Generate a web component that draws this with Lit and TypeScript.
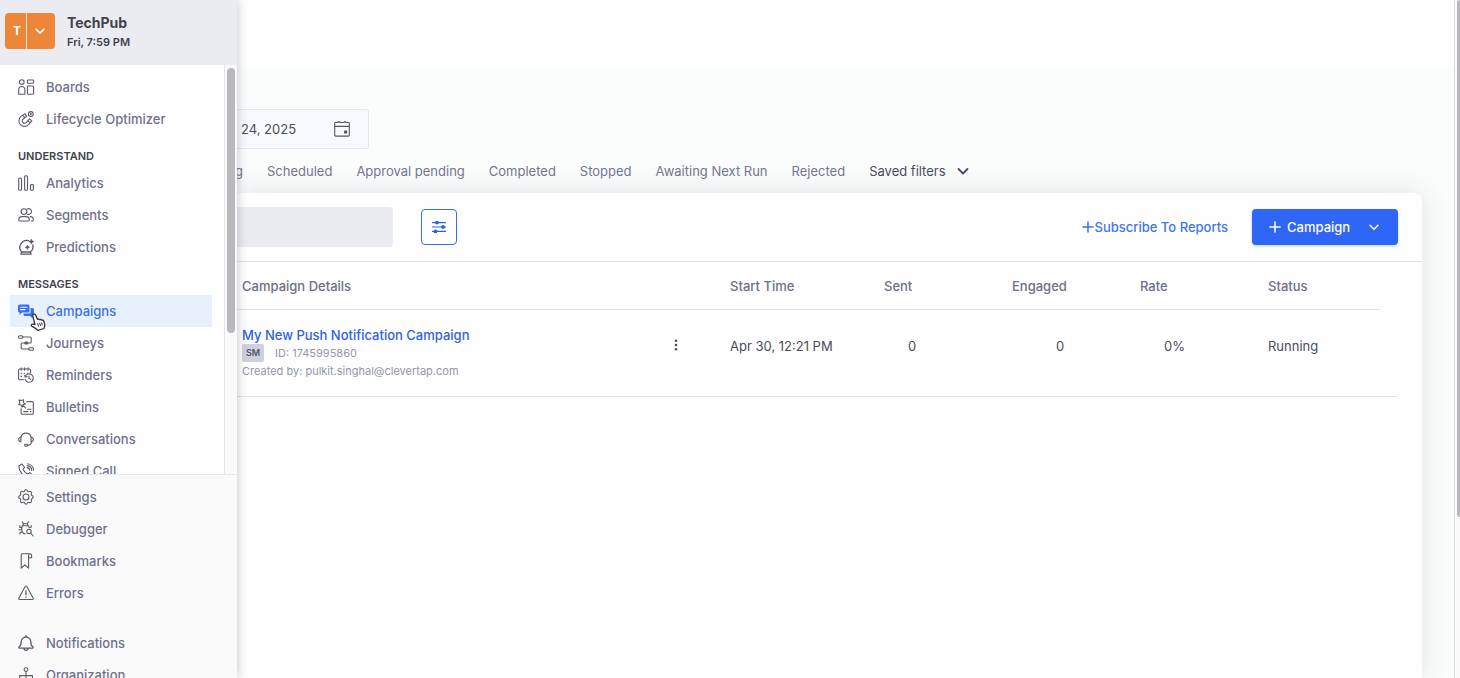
import { LitElement, html, css, svg } from "lit";
import { customElement, property } from "lit/decorators.js";

const icons: Record<string, unknown> = {
  boards: svg`<circle cx="3.800" cy="3" r="2.300"/><rect x="9.400" y="1" width="6.200" height="3.200" rx=".8"/><path d="M.7 15.200V10.600a3.100 3.100 0 0 1 6.200 0v4.600z"/><rect x="9.400" y="7" width="6.200" height="8.200" rx=".6"/>`,
  lifecycle: svg`<circle cx="12.800" cy="3" r="2.400"/><circle cx="12.800" cy="3" r=".5"/><path d="M7 2.600 3 5.400a5.600 5.600 0 1 0 7.600 8.200l3.200-3.800-2.300-2-3.200 3.600a2.300 2.300 0 0 1-3.400-3.200l3.700-3zM4.800 4.200l1.900 2.600M9.800 9.600l2.300 2.200"/>`,
  analytics: svg`<rect x=".7" y="3" width="2.800" height="12.200" rx="1"/><rect x="6.600" y=".8" width="2.900" height="14.400" rx="1"/><rect x="12.500" y="9.600" width="2.900" height="5.600" rx="1"/>`,
  segments: svg`<circle cx="6" cy="4.600" r="2.900"/><path d="M.8 13v-.4c0-1.800 1.300-3 3-3h4.500c1.700 0 3 1.200 3 3v.4c0 .6-.4 1-1 1H1.800c-.6 0-1-.4-1-1z"/><path d="M9.300 1.900a2.900 2.900 0 1 1 .2 5.300M12.200 9.600c1.800 0 3.100 1.200 3.100 3v.4c0 .6-.4 1-1 1h-.8"/>`,
  predictions: svg`<path stroke-width="1.300" d="M10.600 1.600A7 7 0 0 0 3.600 13h8.800A7 7 0 0 0 14.800 6M3.600 13l-.7 2.200h10.200l-.7-2.200"/><path d="m13.400.6.6 1.400 1.400.6-1.400.6-.6 1.400-.6-1.400-1.400-.6 1.400-.6zM9.400 6.600l.5 1.200 1.200.5-1.200.5-.5 1.200-.5-1.200-1.200-.5 1.200-.5z" fill="currentColor"/>`,
  campaigns: svg`<path fill="currentColor" stroke="none" d="M1.500 1.500h8.500a1.500 1.500 0 0 1 1.500 1.500v5a1.500 1.500 0 0 1-1.500 1.500H4L1.500 12V9.400A1.500 1.500 0 0 1 0 8V3a1.500 1.500 0 0 1 1.500-1.500zM12.500 5h2A1.500 1.500 0 0 1 16 6.500v5a1.500 1.500 0 0 1-1.500 1.500v2.400L12 13H7a1.500 1.500 0 0 1-1.500-1.500v-1H11a1.500 1.500 0 0 0 1.500-1.500z"/><path stroke="#e8f1fd" d="M2.500 4.200h6.400M2.500 6.600H7"/>`,
  journeys: svg`<rect x=".6" y=".8" width="4.200" height="2.400" rx="1"/><rect x="10.800" y="12.800" width="4.600" height="2.400" rx="1"/><path d="M4.800 2h7.400c.6 0 1 .4 1 1v4c0 .6-.4 1-1 1H4.200c-.6 0-1 .4-1 1v4c0 .6.4 1 1 1h6.600"/><rect x="6.800" y="7" width="3.200" height="2" rx="1" fill="currentColor"/>`,
  reminders: svg`<path d="M5.400 12.800H1.600a1 1 0 0 1-1-1V3a1 1 0 0 1 1-1h10a1 1 0 0 1 1 1v2.600M3.200.8v2.400M6.600.8v2.400M10 .8v2.400M3 6.200h.6M6.200 6.200h.6M9.400 6.200h.6M3 9.400h.6"/><path d="M7.200 9.400a4.200 4.200 0 1 1-.2 2.800M6.600 8.200l.6 1.800 1.900-.4M11 9v2.400l1.800.8"/>`,
  bulletins: svg`<path d="m1 1 2.200.6 2.400-.8-.2 2.800 2 1.400-2.600.8-.6 2.400-1.400-2.400L.8 5.600 1.800 4zM5 6.400l2.600 2.400M9 2.600h5a1.300 1.300 0 0 1 1.300 1.300v10a1.300 1.300 0 0 1-1.300 1.300H4.400a1.300 1.300 0 0 1-1.300-1.300V9.600M5.800 12.600h4.200M12.400 12.600h.6M9.600 10.200h3.400"/>`,
  conversations: svg`<path d="M2.800 6.400a5.300 5.300 0 0 1 10.400 0M13.400 10.800c0 2-1.400 3.400-3.600 3.400"/><path d="M2.900 6.200C1.400 6.200.7 7.200.7 8.400s.7 2.200 2.200 2.200zM13.100 6.200c1.500 0 2.200 1 2.200 2.200s-.7 2.200-2.200 2.200z"/><rect x="6.600" y="13.200" width="3.200" height="1.900" rx=".9"/>`,
  call: svg`<path d="M3.800 1 .9 3C.6 9 6.600 15.400 13 15.200l2.200-2.700-3.500-2.900-2 1.400C7.400 10 6 8.300 5 6.300l1.500-1.900zM9.200 4.600a2.800 2.800 0 0 1 2.400 2.700M9.300 2.600a5 5 0 0 1 4.400 4.900M9.400.700a7 7 0 0 1 6.200 6.600"/>`,
  settings: svg`<circle cx="8" cy="8" r="3"/><path d="M6.600 1.800C7 .4 9 .4 9.400 1.800c.3.900 1.200 1.200 2 .8 1.300-.7 2.700.7 2 2-.4.800-.1 1.700.8 2 1.400.4 1.400 2.400 0 2.800-.9.300-1.200 1.200-.8 2 .7 1.300-.7 2.700-2 2-.8-.4-1.700-.1-2 .8-.4 1.400-2.400 1.400-2.800 0-.3-.9-1.200-1.200-2-.8-1.300.7-2.700-.7-2-2 .4-.8.100-1.700-.8-2-1.400-.4-1.400-2.400 0-2.800.9-.3 1.200-1.200.8-2-.7-1.300.7-2.700 2-2 .8.400 1.700.1 2-.8z"/>`,
  debugger: svg`<path d="M4.400 4.800h6M4.200 5c-.5 1.600-.6 3.600-.1 5.200.5 1.400 1.600 2.500 3.100 2.700M10.600 5c.3.600.4 1 .4 1.600M4.600 4.600a2.900 2.900 0 0 1 5.600 0M5.400 2.600 4.200.8M9.400 2.600 10.600.8M4 6.400H1.800V4.600M3.600 8.800H.8M4.200 11.200H2v1.800M11 6.200h2.200V4.600"/><circle cx="11" cy="10.400" r="2.200"/><path d="m12.600 12.200 2.600 2.800"/>`,
  bookmarks: svg`<path d="M4.200.8h7.700a1.700 1.700 0 0 1 1.700 1.700v2.300h-3M12 .8a1.500 1.500 0 0 0-1.400 1.500v12.900l-3.700-3.200-3.700 3.200V1.800a1 1 0 0 1 1-1"/>`,
  errors: svg`<path d="M7.200 1.600a.9.900 0 0 1 1.600 0l6.400 11.600c.3.600 0 1.300-.8 1.300H1.600c-.8 0-1.100-.7-.8-1.300z"/><path stroke-width="1.300" d="M8 5.800v4M8 12v.2"/>`,
  notifications: svg`<path stroke-width="1.300" d="M8 .5v1.200M3.200 6.800a4.800 4.800 0 0 1 9.600 0c0 3.400.7 4.200 2 5 .7.500.4 1.300-.4 1.300H1.600c-.8 0-1.100-.8-.4-1.300 1.300-.8 2-1.600 2-5zM6 13.300a2 2 0 0 0 4 0"/>`,
  organization: svg`<circle cx="8" cy="2.600" r="1.900"/><path d="M8 4.600v8M1.600 12.400V8.600h12.800v3.800"/><circle cx="1.800" cy="13.600" r="1.300"/><circle cx="8" cy="13.600" r="1.300"/><circle cx="14.200" cy="13.600" r="1.300"/>`,
  calendar: svg`<path d="M.7 2.400c0-.5.400-.9.900-.9h2.200l1.200-1 1.200 1h3.600l1.200-1 1.200 1h2.200c.5 0 .9.400.9.900v11.700a1 1 0 0 1-1 1H1.700a1 1 0 0 1-1-1zM.7 5.400h14.600"/><rect x="10.600" y="10" width="2" height="2" fill="currentColor"/>`,
  sliders: svg`<path d="M1.500 3.600h13M1.500 8h13M1.500 12.400h13"/><g fill="currentColor" stroke="none"><circle cx="6" cy="3.600" r="1.900"/><circle cx="12" cy="8" r="1.900"/><circle cx="4.500" cy="12.400" r="1.900"/></g>`,
  chevron: svg`<path d="m3.500 6 4.500 4.500L12.500 6"/>`,
  plus: svg`<path d="M8 2.200v11.600M2.200 8h11.600"/>`,
  kebab: svg`<g fill="currentColor" stroke="none"><circle cx="8" cy="3.200" r="1.500"/><circle cx="8" cy="8" r="1.500"/><circle cx="8" cy="12.800" r="1.500"/></g>`,
};

@customElement("ui-icon")
export class UiIcon extends LitElement {
  @property() name = "";
  static styles = css`
    :host { display: inline-flex; width: 16px; height: 16px; flex: none; }
    .glyph {
      width: 100%; height: 100%; overflow: visible; fill: none; stroke: currentColor;
      stroke-width: var(--icon-stroke, 1.1); stroke-linecap: round; stroke-linejoin: round;
    }
  `;
  render() {
    return html`<svg class="glyph" viewBox="0 0 16 16" aria-hidden="true">${icons[this.name]}</svg>`;
  }
}

interface NavItem { icon: string; label: string; active?: boolean; }

const groups: { title?: string; items: NavItem[] }[] = [
  { items: [{ icon: "boards", label: "Boards" }, { icon: "lifecycle", label: "Lifecycle Optimizer" }] },
  {
    title: "UNDERSTAND",
    items: [
      { icon: "analytics", label: "Analytics" },
      { icon: "segments", label: "Segments" },
      { icon: "predictions", label: "Predictions" },
    ],
  },
  {
    title: "MESSAGES",
    items: [
      { icon: "campaigns", label: "Campaigns", active: true },
      { icon: "journeys", label: "Journeys" },
      { icon: "reminders", label: "Reminders" },
      { icon: "bulletins", label: "Bulletins" },
      { icon: "conversations", label: "Conversations" },
      { icon: "call", label: "Signed Call" },
    ],
  },
];

const tools: NavItem[] = [
  { icon: "settings", label: "Settings" },
  { icon: "debugger", label: "Debugger" },
  { icon: "bookmarks", label: "Bookmarks" },
  { icon: "errors", label: "Errors" },
];

const account: NavItem[] = [
  { icon: "notifications", label: "Notifications" },
  { icon: "organization", label: "Organization" },
];

@customElement("side-nav")
export class SideNav extends LitElement {
  static styles = css`
    :host {
      display: flex; flex-direction: column; position: relative; z-index: 1; min-height: 0;
      background: #fefefe; box-shadow: 0 0 10px rgba(40, 44, 70, 0.28);
    }
    .org { display: flex; align-items: flex-start; gap: 12px; height: 65px; padding: 13px 5px 0; box-sizing: border-box; background: #ebecf1; flex: none; }
    .switch {
      display: grid; grid-template-columns: 22px 1fr; width: 50px; height: 36px; padding: 0; border: 0;
      border-radius: 4px; overflow: hidden; background: #ee8639; color: #fff; font: 700 12px/36px Inter, sans-serif;
    }
    .initial { border-right: 1px solid #fbe3d0; padding-left: 3px; }
    .caret { display: grid; place-items: center; padding-right: 3px; --icon-stroke: 2; }
    .caret ui-icon { width: 14px; height: 14px; }
    .name { margin: 0; font-size: 14px; line-height: 20px; font-weight: 700; color: #42434d; }
    .time { margin: 0; font-size: 11px; line-height: 19px; font-weight: 600; color: #42434d; }
    .scroller { display: grid; grid-template-columns: 1fr 13px; flex: 0 0 409px; overflow: hidden; }
    .list { padding: 6px 12px 0 10px; overflow: hidden; }
    .track { border-left: 1px solid #e4e4ea; padding: 3px 2px; background: #fbfbfb; }
    .thumb { height: 265px; width: 8px; border-radius: 4px; background: #b9b9bb; }
    .title { margin: 0; height: 32px; padding: 11px 8px 0; box-sizing: border-box; font-size: 11px; line-height: 20px; font-weight: 600; color: #42434d; }
    .item {
      display: flex; align-items: center; gap: 12px; height: 32px; padding: 0 8px;
      color: #70708c; font-size: 13px; font-weight: 500; text-decoration: none;
    }
    .item ui-icon { color: #5c5d64; }
    .item.active, .item.active ui-icon { color: #3a71ee; }
    .item.active { background: #e8f1fb; }
    .lower { flex: 1; min-height: 0; overflow: hidden; padding: 6px 12px 0 10px; border-top: 1px solid #e8e8ee; background: #fafafb; }
    .account { margin-top: 18px; }
    .pointer { position: absolute; left: 29px; top: 313px; width: 17px; height: 18px; }
  `;
  private item(i: NavItem) {
    return html`<a class="item ${i.active ? "active" : ""}" href="#"><ui-icon name=${i.icon}></ui-icon>${i.label}</a>`;
  }
  render() {
    return html`
      <div class="org">
        <button class="switch" aria-label="Switch project">
          <span class="initial">T</span><span class="caret"><ui-icon name="chevron"></ui-icon></span>
        </button>
        <div><p class="name">TechPub</p><p class="time">Fri, 7:59 PM</p></div>
      </div>
      <div class="scroller">
        <nav class="list">
          ${groups.map((g) => html`${g.title ? html`<h2 class="title">${g.title}</h2>` : ""}${g.items.map((i) => this.item(i))}`)}
        </nav>
        <div class="track"><div class="thumb"></div></div>
      </div>
      <nav class="lower">
        ${tools.map((i) => this.item(i))}
        <div class="account">${account.map((i) => this.item(i))}</div>
      </nav>
      <svg class="pointer" viewBox="0 0 17 18" aria-hidden="true">
        <path fill="#fff" stroke="#333" stroke-width="1.300" stroke-linejoin="round" d="M4.400 1.400c.9-.6 1.900-.2 2.300.7l1.700 4.200c.8-.5 1.700-.3 2.100.4.800-.5 1.700-.2 2.100.5 1-.4 1.900 0 2.200 1l.8 2.600c.4 1.700-.2 3-.5 4.700L8.800 17.400c-1.400-1.900-3.500-2.900-5.900-4.200-1.100-.8-.3-2.200.9-2.100l2.200.4L3.800 3.200c-.3-.8-.1-1.400.6-1.800z"/>
        <path fill="none" stroke="#333" d="m8.600 10.400 1 3.200M10.600 9.900l1 3.200M12.500 9.400l.8 3"/>
      </svg>
    `;
  }
}

@customElement("campaign-table")
export class CampaignTable extends LitElement {
  static styles = css`
    :host { display: block; padding-right: 25px; }
    .table { width: 100%; border-collapse: collapse; table-layout: fixed; font-size: 13px; color: #4c4d5a; }
    .menu-col { width: 80px; }
    .start-col { width: 154px; }
    .num-col { width: 128px; }
    .status-col { width: 112px; }
    .gutter-col { width: 17px; }
    .head { height: 47px; padding: 0; text-align: left; font-weight: 500; color: #6f6f86; border-bottom: 1px solid #e2e3ea; }
    .cell { height: 71px; padding: 0 0 15px; border-bottom: 1px solid #e2e3ea; }
    .head.details { padding-left: 5px; }
    .cell.details { padding: 0 0 0 5px; }
    .cell.short { padding-left: 24px; }
    .cell.wide { padding-left: 44px; }
    .link { display: block; font-size: 13px; line-height: 18px; font-weight: 500; color: #2f62e4; text-decoration: none; }
    .meta { display: flex; align-items: center; gap: 11px; font-size: 11px; line-height: 18px; color: #9596aa; }
    .tag { width: 22px; text-align: center; border-radius: 2px; background: #cfd0de; color: #55566a; font-size: 9px; font-weight: 600; }
    .more { display: block; width: 24px; height: 24px; padding: 4px; border: 0; background: none; color: #4c4d5a; margin-left: 14px; }
    .more ui-icon { width: 16px; height: 14px; }
  `;
  render() {
    return html`
      <table class="table">
        <colgroup>
          <col /><col class="menu-col" /><col class="start-col" /><col class="num-col" /><col class="num-col" />
          <col class="num-col" /><col class="status-col" /><col class="gutter-col" />
        </colgroup>
        <thead>
          <tr>
            <th class="head details" colspan="2">Campaign Details</th>
            <th class="head">Start Time</th><th class="head">Sent</th><th class="head">Engaged</th>
            <th class="head">Rate</th><th class="head">Status</th><td></td>
          </tr>
        </thead>
        <tbody>
          <tr>
            <td class="cell details">
              <a class="link" href="#">My New Push Notification Campaign</a>
              <div class="meta"><span class="tag">SM</span><span>ID: 1745995860</span></div>
              <div class="meta">Created by: pulkit.singhal@clevertap.com</div>
            </td>
            <td class="cell"><button class="more" aria-label="More actions"><ui-icon name="kebab"></ui-icon></button></td>
            <td class="cell">Apr 30, 12:21 PM</td>
            <td class="cell short">0</td><td class="cell wide">0</td><td class="cell short">0%</td>
            <td class="cell" colspan="2">Running</td>
          </tr>
        </tbody>
      </table>
    `;
  }
}

@customElement("app-root")
export class AppRoot extends LitElement {
  static styles = css`
    :host {
      display: grid; grid-template-columns: 237px minmax(0, 1fr) 6px; height: 100vh; overflow: hidden;
      font-family: Inter, "Open Sans", sans-serif; background: #fafbfc;
    }
    .main { display: flex; flex-direction: column; min-height: 0; overflow: hidden; }
    .topbar { height: 66px; flex: none; background: #fefefe; }
    .content { flex: 1; display: flex; flex-direction: column; padding: 43px 32px 0 0; background: #fbfcfc; }
    .date {
      display: flex; align-items: center; justify-content: space-between; width: 132px; height: 40px; padding: 0 18px 0 4px; box-sizing: border-box;
      border: 1px solid #e4e7ec; border-left: 0; border-radius: 0 3px 3px 0; background: #f8f9fc; color: #55565f;
    }
    .date-input { width: 70px; padding: 0; border: 0; background: none; font: 400 13px/20px Inter, sans-serif; color: #4c4d58; }
    .tabs { display: flex; align-items: center; gap: 24px; height: 44px; white-space: nowrap; font-size: 13px; }
    .tab { color: #77778f; text-decoration: none; }
    .tab.cut { display: flex; justify-content: flex-end; width: 6px; overflow: hidden; }
    .saved { display: flex; align-items: center; gap: 9px; padding: 0; border: 0; background: none; font: 400 13px/20px Inter, sans-serif; color: #4c4d5e; --icon-stroke: 1.8; }
    .card { flex: 1; border-radius: 0 8px 0 0; background: #fefefe; box-shadow: 0 0 28px rgba(50, 54, 70, 0.13); }
    .toolbar { display: flex; align-items: center; height: 68px; padding-right: 24px; border-bottom: 1px solid #e2e3ea; }
    .search { width: 156px; height: 40px; box-sizing: border-box; border: 0; border-radius: 0 4px 4px 0; background: #eaecf1; padding: 0 8px; }
    .filter { display: grid; place-items: center; width: 36px; height: 36px; margin-left: 28px; padding: 0; border: 1px solid #3a6ee8; border-radius: 4px; background: #fefefe; color: #2e5fe0; }
    .subscribe { display: flex; align-items: center; margin-left: auto; margin-right: 24px; font-size: 13px; font-weight: 500; color: #3f74f2; text-decoration: none; --icon-stroke: 1.8; }
    .subscribe ui-icon { width: 14px; }
    .create {
      display: flex; align-items: center; width: 146px; height: 36px; padding: 0 17px 0 16px; border: 0; border-radius: 4px; background: #2f66f6; color: #fff;
      font: 500 13px/20px Inter, sans-serif; box-shadow: 0 1px 3px rgba(47, 102, 246, 0.3); --icon-stroke: 1.8;
    }
    .create ui-icon { width: 14px; height: 14px; }
    .create-label { flex: 1; text-align: left; padding-left: 5px; }
    .rail { border-left: 1px solid #dddde2; background: #fafafa; padding-left: 2px; }
    .grip { height: 517px; border-radius: 3px 0 0 3px; background: #b9b9bb; }
  `;
  render() {
    const tabs = ["Scheduled", "Approval pending", "Completed", "Stopped", "Awaiting Next Run", "Rejected"];
    return html`
      <side-nav></side-nav>
      <main class="main">
        <header class="topbar"></header>
        <section class="content">
          <label class="date">
            <input class="date-input" type="text" aria-label="End date" .value=${"24, 2025"} />
            <ui-icon name="calendar"></ui-icon>
          </label>
          <nav class="tabs">
            <a class="tab cut" href="#">Running</a>
            ${tabs.map((t) => html`<a class="tab" href="#">${t}</a>`)}
            <button class="saved">Saved filters <ui-icon name="chevron"></ui-icon></button>
          </nav>
          <div class="card">
            <div class="toolbar">
              <input class="search" type="search" aria-label="Search campaigns" />
              <button class="filter" aria-label="Filters"><ui-icon name="sliders"></ui-icon></button>
              <a class="subscribe" href="#"><ui-icon name="plus"></ui-icon>Subscribe To Reports</a>
              <button class="create"><ui-icon name="plus"></ui-icon><span class="create-label">Campaign</span><ui-icon name="chevron"></ui-icon></button>
            </div>
            <campaign-table></campaign-table>
          </div>
        </section>
      </main>
      <div class="rail"><div class="grip"></div></div>
    `;
  }
}
